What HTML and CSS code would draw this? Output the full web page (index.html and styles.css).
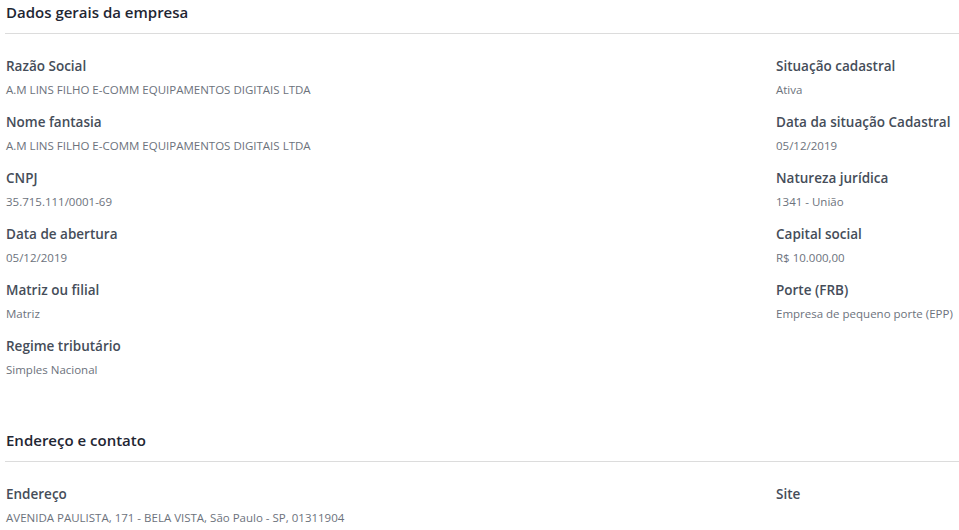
FILE: index.html
```html
<!DOCTYPE html>
<html lang="pt-BR">
<head>
<meta charset="utf-8">
<link rel="stylesheet" href="styles.css">
</head>
<body>
<section class="section">
  <h2 class="section-title">Dados gerais da empresa</h2>
  <div class="grid">
    <div class="col">
      <div class="field"><div class="label">Razão Social</div><div class="value">A.M LINS FILHO E-COMM EQUIPAMENTOS DIGITAIS LTDA</div></div>
      <div class="field"><div class="label">Nome fantasia</div><div class="value">A.M LINS FILHO E-COMM EQUIPAMENTOS DIGITAIS LTDA</div></div>
      <div class="field"><div class="label">CNPJ</div><div class="value">35.715.111/0001-69</div></div>
      <div class="field"><div class="label">Data de abertura</div><div class="value">05/12/2019</div></div>
      <div class="field"><div class="label">Matriz ou filial</div><div class="value">Matriz</div></div>
      <div class="field"><div class="label">Regime tributário</div><div class="value">Simples Nacional</div></div>
    </div>
    <div class="col">
      <div class="field"><div class="label">Situação cadastral</div><div class="value">Ativa</div></div>
      <div class="field"><div class="label">Data da situação Cadastral</div><div class="value">05/12/2019</div></div>
      <div class="field"><div class="label">Natureza jurídica</div><div class="value">1341 - União</div></div>
      <div class="field"><div class="label">Capital social</div><div class="value">R$ 10.000,00</div></div>
      <div class="field"><div class="label">Porte (FRB)</div><div class="value">Empresa de pequeno porte (EPP)</div></div>
    </div>
  </div>
</section>
<section class="section section-next">
  <h2 class="section-title">Endereço e contato</h2>
  <div class="grid">
    <div class="col">
      <div class="field"><div class="label">Endereço</div><div class="value">AVENIDA PAULISTA, 171 - BELA VISTA, São Paulo - SP, 01311904</div></div>
    </div>
    <div class="col">
      <div class="field"><div class="label">Site</div><div class="value"></div></div>
    </div>
  </div>
</section>
</body>
</html>
```
FILE: styles.css
```css
html, body {
  margin: 0;
  padding: 0;
  background: #ffffff;
}
body {
  font-family: "Open Sans", "Noto Sans", sans-serif;
  padding-left: 5px;
}
.section-title {
  margin: 0;
  font-size: 15px;
  font-weight: 600;
  line-height: 24px;
  color: #1f2633;
  padding: 0 0 9px 1px;
  border-bottom: 1px solid #dcdcdc;
}
.section-next {
  margin-top: 46px;
}
.grid {
  display: grid;
  grid-template-columns: 1fr 183px;
  padding: 20px 0 0 1px;
}
.col {
  display: flex;
  flex-direction: column;
  gap: 8px;
}
.label {
  font-size: 13.5px;
  font-weight: 600;
  line-height: 24px;
  color: #454d59;
}
.value {
  font-size: 11.5px;
  line-height: 24px;
  color: #6c727c;
  min-height: 24px;
}
```
